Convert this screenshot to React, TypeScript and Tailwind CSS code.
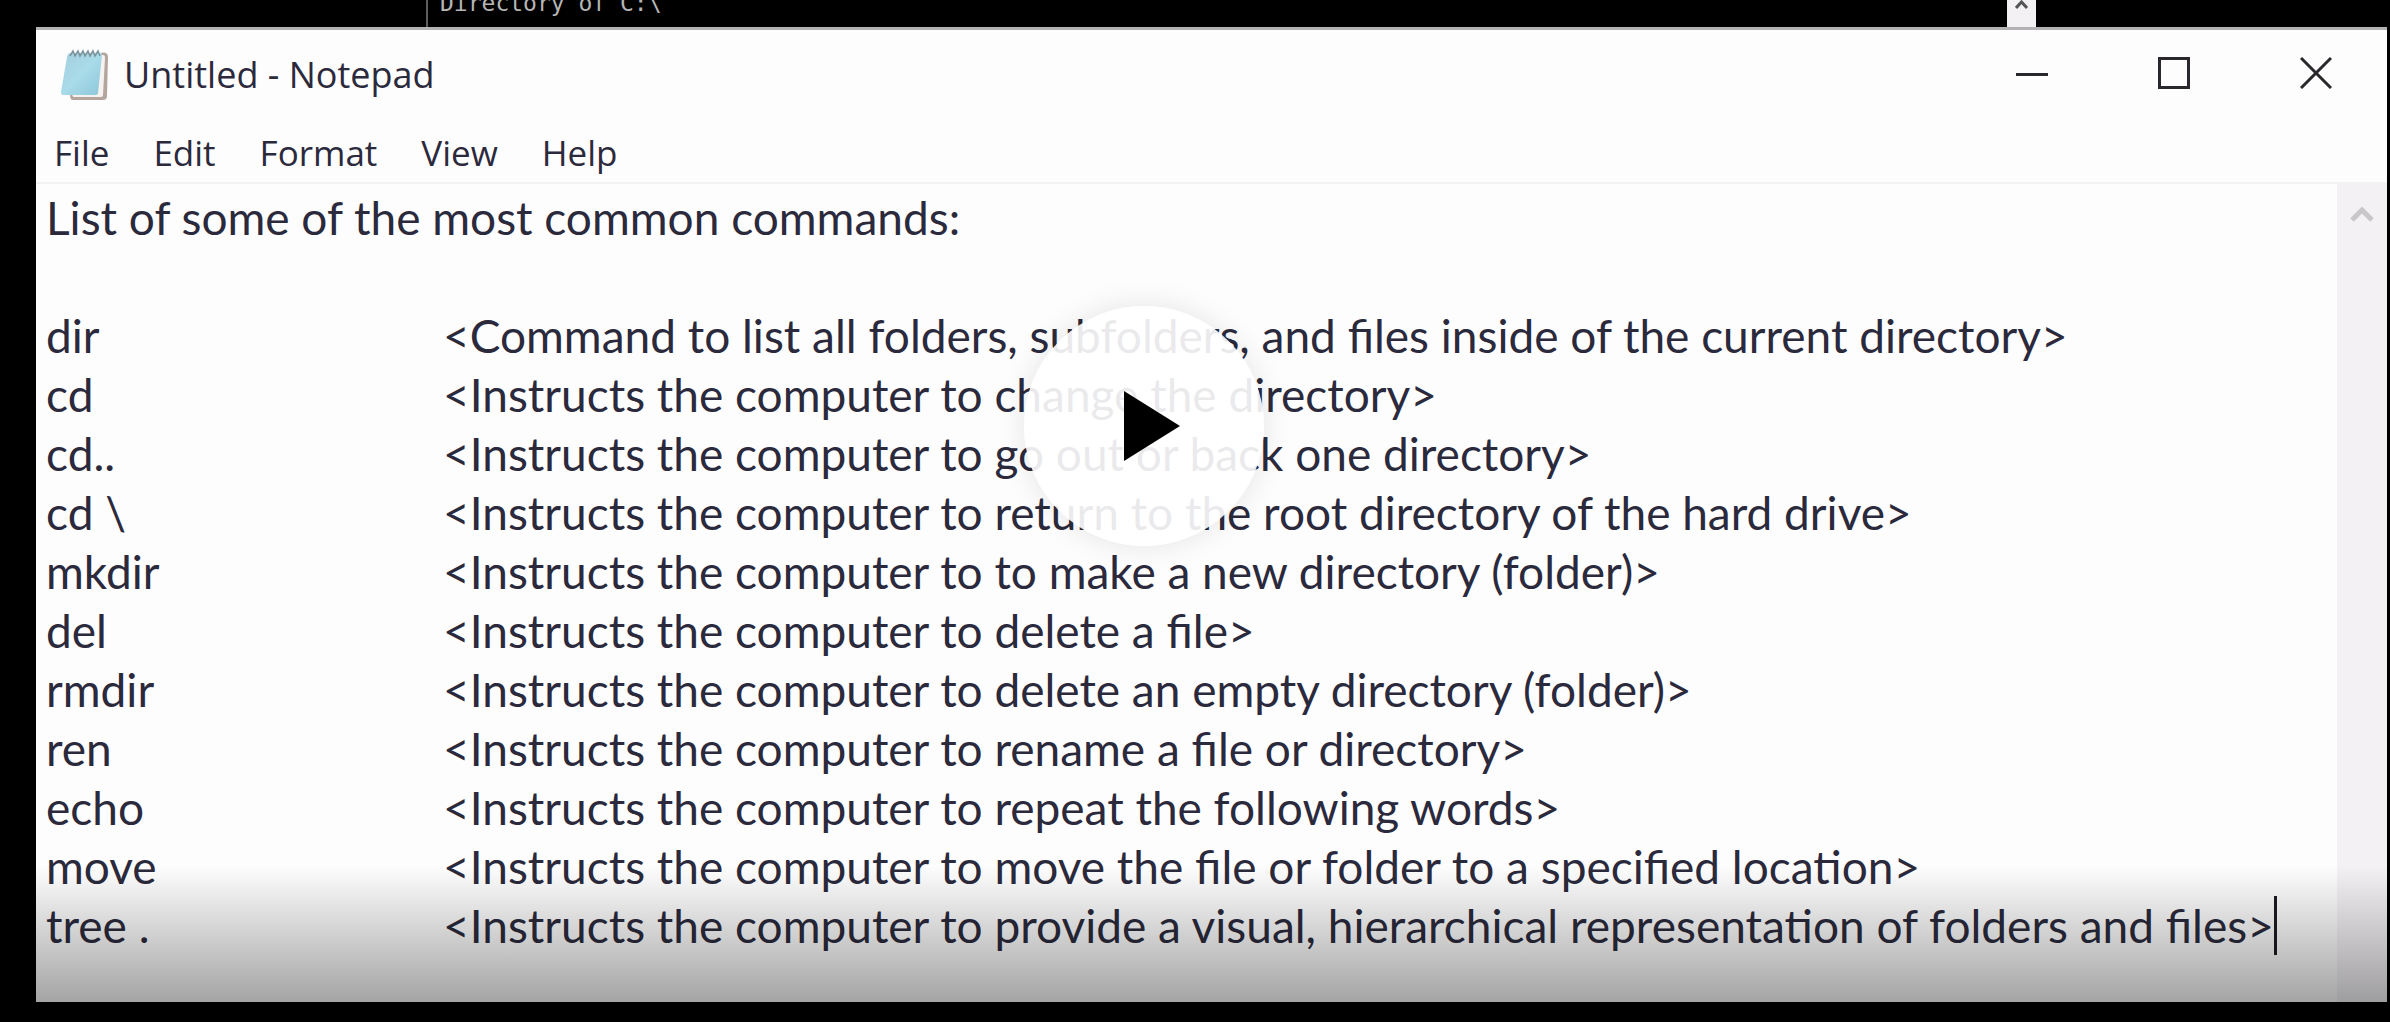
const commands: [string, string][] = [
  ['dir', '<Command to list all folders, subfolders, and files inside of the current directory>'],
  ['cd', '<Instructs the computer to change the directory>'],
  ['cd..', '<Instructs the computer to go out or back one directory>'],
  ['cd \\', '<Instructs the computer to return to the root directory of the hard drive>'],
  ['mkdir', '<Instructs the computer to to make a new directory (folder)>'],
  ['del', '<Instructs the computer to delete a file>'],
  ['rmdir', '<Instructs the computer to delete an empty directory (folder)>'],
  ['ren', '<Instructs the computer to rename a file or directory>'],
  ['echo', '<Instructs the computer to repeat the following words>'],
  ['move', '<Instructs the computer to move the file or folder to a specified location>'],
  ['tree .', '<Instructs the computer to provide a visual, hierarchical representation of folders and files>'],
];

const menus = ['File', 'Edit', 'Format', 'View', 'Help'];

function NotepadIcon() {
  return (
    <svg width="48" height="52" viewBox="0 0 48 52" aria-hidden="true">
      <defs>
        <linearGradient id="cover" x1="0" y1="0" x2="1" y2="1">
          <stop offset="0" stopColor="#a5cfdd" />
          <stop offset="0.5" stopColor="#a9dbe9" />
          <stop offset="1" stopColor="#8cc7da" />
        </linearGradient>
      </defs>
      <path d="M10 46 L40 4 Q48 2 48 8 L47 47 Q47 51 43 51 H13 Q10 51 10 46 Z" fill="#b5a59f" />
      <path d="M12 44 L40 6 H43 Q45 6 45 9 L43 46 Q43 48 41 48 H14 Q12 48 12 44 Z" fill="#f6f2ef" />
      <path d="M10 4 H41 Q42 4 42 6 L38 44 Q38 46 36 46 H3 Q1 46 1 43 L7 8 Q8 4 10 4 Z" fill="url(#cover)" />
      <path
        d="M10 7 l3-5 l2 5 l3-5 l2 5 l3-5 l2 5 l3-5 l2 5 l3-5 l2 5 l3-5 l2 5"
        fill="none"
        stroke="#7c939c"
        strokeWidth="1.500"
      />
    </svg>
  );
}

function ConsoleStrip() {
  return (
    <div className="flex h-[27px] overflow-hidden bg-black">
      <div className="ml-[426px] flex flex-1 border-l-2 border-[#5c5c5c]">
        <p className="-mt-3 ml-3 font-['DejaVu_Sans_Mono',monospace] text-[23px] leading-[30px] text-[#b5b5b5]">
          Directory of C:\
        </p>
      </div>
      <div className="mr-[354px] flex w-[29px] justify-center bg-[#f3f1f4]">
        <svg width="13" height="10" viewBox="0 0 13 10" fill="none" stroke="#555" strokeWidth="3" aria-hidden="true">
          <path d="M1 8 L6.500 2 L12 8" />
        </svg>
      </div>
    </div>
  );
}

export default function App() {
  return (
    <main className="relative min-h-screen overflow-hidden bg-black">
      <ConsoleStrip />
      <section className="mr-[3px] ml-9 flex flex-col border-t-[3px] border-[#b4b2b4] bg-[#fefdfe] font-['Open_Sans',sans-serif] text-[#2b2a3c]">
        <header className="flex h-[86px] items-center">
          <div className="mt-1 ml-6 flex flex-1 items-center gap-4">
            <NotepadIcon />
            <h1 className="text-[36px] leading-10">Untitled - Notepad</h1>
          </div>
          <div className="flex text-[#2a282c]">
            <button aria-label="Minimize" className="flex h-[86px] w-[142px] items-center justify-center">
              <svg width="32" height="32" viewBox="0 0 32 32" fill="none" stroke="currentColor" strokeWidth="3"><path d="M0 17.500 H32" /></svg>
            </button>
            <button aria-label="Maximize" className="flex h-[86px] w-[142px] items-center justify-center">
              <svg width="32" height="32" viewBox="0 0 32 32" fill="none" stroke="currentColor" strokeWidth="3"><path d="M1.500 1.500 H30.500 V30.500 H1.500 Z" /></svg>
            </button>
            <button aria-label="Close" className="flex h-[86px] w-[142px] items-center justify-center">
              <svg width="32" height="32" viewBox="0 0 32 32" fill="none" stroke="currentColor" strokeWidth="3"><path d="M1 1 L31 31 M31 1 L1 31" /></svg>
            </button>
          </div>
        </header>
        <nav className="flex h-[68px] items-center gap-11 border-b-2 border-[#f3f1f4] pt-2 pl-[18px]">
          {menus.map((m) => (
            <button key={m} className="text-[35px] leading-10">{m}</button>
          ))}
        </nav>
        <div className="flex">
          <div className="flex-1 pl-[10px] font-['Lato',sans-serif] text-[46px] leading-[59px] whitespace-nowrap">
            <p className="mt-1 mb-[59px]">List of some of the most common commands:</p>
            <dl className="mb-[47px]">
              {commands.map(([name, text], i) => (
                <div key={name} className="flex">
                  <dt className="w-[397px]">{name}</dt>
                  <dd className={i === commands.length - 1 ? 'border-r-[3px] border-[#1c1b22]' : ''}>{text}</dd>
                </div>
              ))}
            </dl>
          </div>
          <div className="flex w-[50px] justify-center bg-[#f3f1f4]">
            <button aria-label="Scroll up" className="flex h-[60px] items-center">
              <svg width="24" height="20" viewBox="0 0 24 20" fill="none" stroke="#c9c7ca" strokeWidth="5" aria-hidden="true"><path d="M2 16 L12 6 L22 16" /></svg>
            </button>
          </div>
        </div>
      </section>
      <div className="h-5 bg-black" />
      <div className="pointer-events-none absolute right-0 bottom-5 left-0 h-[136px] bg-linear-to-b from-transparent to-black/35" />
      <button
        aria-label="Play video"
        className="absolute top-[306px] left-[1024px] flex size-60 items-center justify-center rounded-full bg-white/90 shadow-[0_0_30px_rgba(0,0,0,0.1)]"
      >
        <svg width="56" height="70" viewBox="0 0 56 70" className="ml-4" aria-hidden="true"><path d="M0 0 L56 35 L0 70 Z" fill="#000" /></svg>
      </button>
    </main>
  );
}
